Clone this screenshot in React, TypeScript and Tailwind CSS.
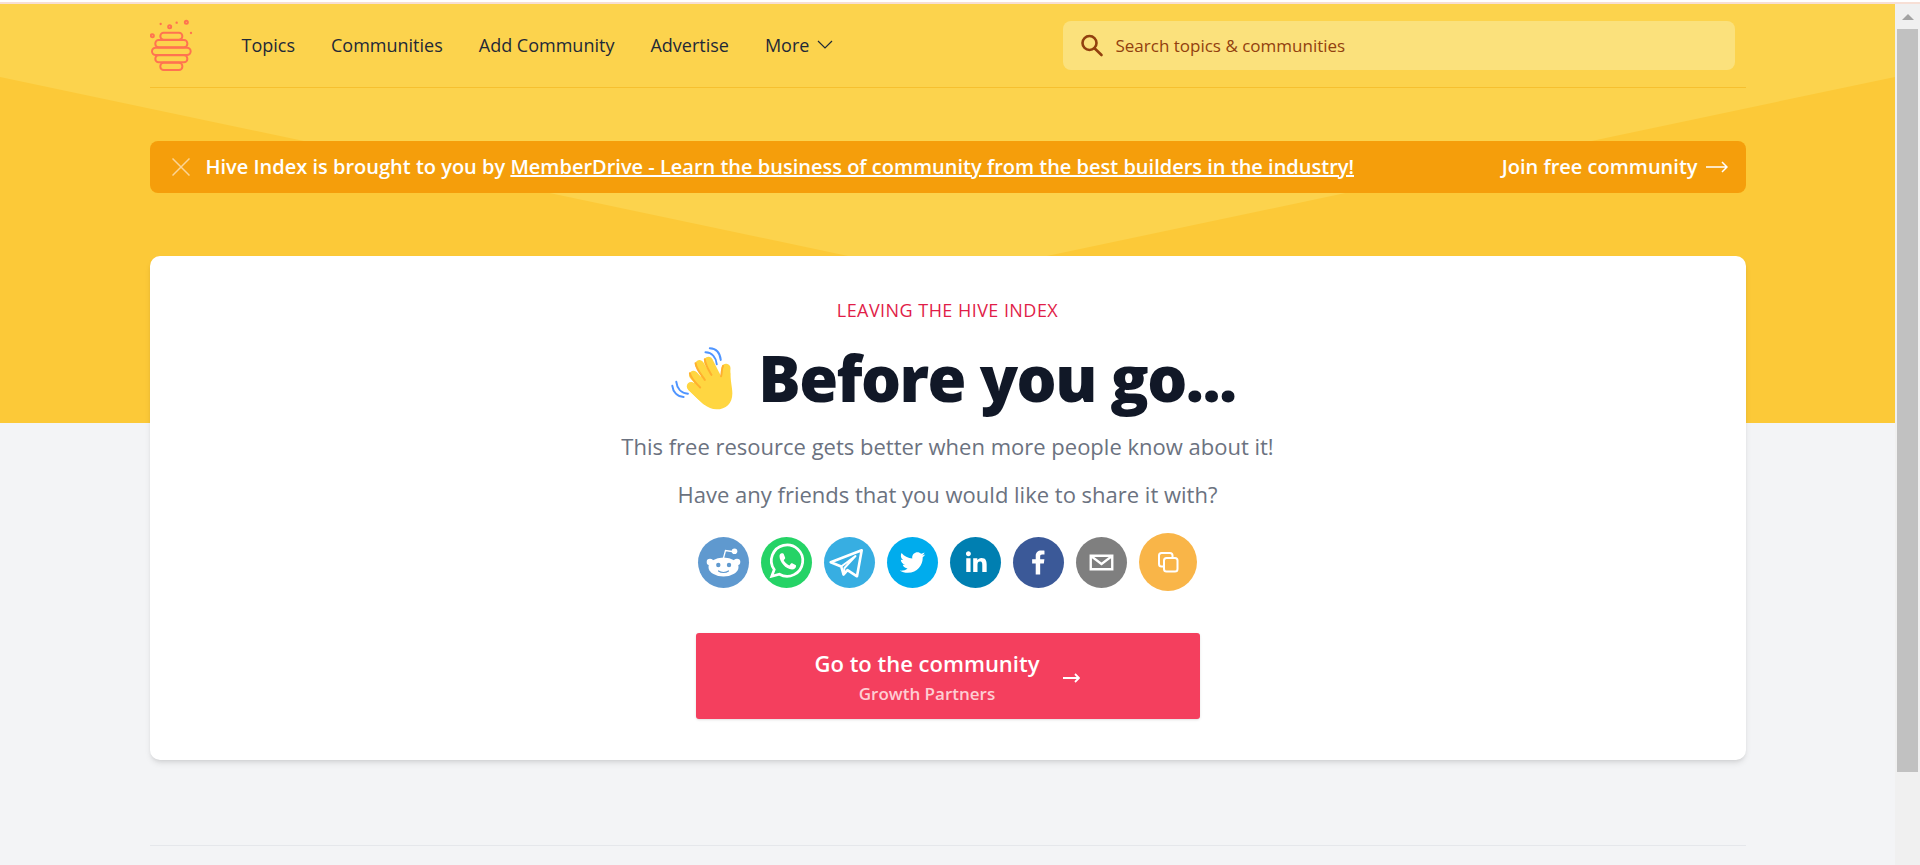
import React from "react";

const navLinks = ["Topics", "Communities", "Add Community", "Advertise"];

const shareLinks = [
  {
    id: "reddit",
    label: "Share on Reddit",
    color: "bg-[#5f99cf]",
    icon: (
      <svg viewBox="0 0 51 51" className="w-full" fill="none">
        <path d="M25.500 21 27.500 13.500 34 14.500" stroke="white" strokeWidth="1.300" />
        <circle cx="36.500" cy="14.300" r="2.800" fill="white" />
        <circle cx="12" cy="25" r="3.300" fill="white" />
        <circle cx="39" cy="25" r="3.300" fill="white" />
        <ellipse cx="25.500" cy="30" rx="15" ry="9.500" fill="white" />
        <circle cx="20.300" cy="28" r="2.200" fill="#5f99cf" />
        <circle cx="31" cy="28" r="2.200" fill="#5f99cf" />
        <path d="M20.500 34c2.800 2 7.200 2 10 0" stroke="#5f99cf" strokeWidth="1.200" strokeLinecap="round" />
      </svg>
    ),
  },
  {
    id: "whatsapp",
    label: "Share on WhatsApp",
    color: "bg-[#25d366]",
    icon: (
      <svg viewBox="0 0 51 51" className="w-full" fill="none">
        <path d="M13.200 32.600A15.700 15.700 0 1 1 18.400 37.300L10.700 39.300Z" stroke="white" strokeWidth="2.700" />
        <path
          d="M18.500 19c0-1.500 1.200-2.700 2.200-2.700h1c.5 0 .8.3 1 .8l1.400 3.400c.2.5.1.8-.2 1.200l-1.200 1.500c1.300 2.400 3.200 4.100 5.700 5.200l1.600-1.800c.3-.4.7-.5 1.200-.3l3.300 1.600c.5.2.7.5.6 1-.2 2.100-1.800 3.500-4 3.500C24.500 32.400 18.500 24.800 18.500 19z"
          fill="white"
        />
      </svg>
    ),
  },
  {
    id: "telegram",
    label: "Share on Telegram",
    color: "bg-[#37aee2]",
    icon: (
      <svg viewBox="0 0 51 51" className="w-full" fill="none" stroke="white" strokeLinejoin="round" strokeLinecap="round">
        <path d="M6.700 25.200 37.700 13.300 33 39.300 23.500 33.200 19.500 37.500 17.200 29.500Z" strokeWidth="2.600" />
        <path d="M17.200 29.500 31.500 19 20.500 31 19.500 37" strokeWidth="2" />
      </svg>
    ),
  },
  {
    id: "twitter",
    label: "Share on Twitter",
    color: "bg-[#00aced]",
    icon: (
      <svg viewBox="0 0 64 64" className="w-full" fill="white">
        <path d="M48,22.1c-1.2,0.5-2.4,0.9-3.8,1c1.4-0.8,2.4-2.1,2.9-3.6c-1.3,0.8-2.7,1.3-4.2,1.6 C41.7,19.8,40,19,38.2,19c-3.6,0-6.6,2.9-6.6,6.6c0,0.5,0.1,1,0.2,1.5c-5.5-0.3-10.3-2.9-13.5-6.9c-0.6,1-0.9,2.1-0.9,3.3 c0,2.3,1.2,4.3,2.9,5.5c-1.1,0-2.1-0.3-3-0.8c0,0,0,0.1,0,0.1c0,3.2,2.3,5.8,5.3,6.4c-0.6,0.1-1.1,0.2-1.7,0.2c-0.4,0-0.8,0-1.2-0.1 c0.8,2.6,3.3,4.5,6.1,4.6c-2.2,1.8-5.1,2.8-8.2,2.8c-0.5,0-1.1,0-1.6-0.1c2.9,1.9,6.4,2.9,10.1,2.9c12.1,0,18.7-10,18.7-18.7 c0-0.3,0-0.6,0-0.8C46,24.5,47.1,23.4,48,22.1z" />
      </svg>
    ),
  },
  {
    id: "linkedin",
    label: "Share on LinkedIn",
    color: "bg-[#007fb1]",
    icon: (
      <svg viewBox="0 0 64 64" className="w-full" fill="white">
        <path d="M20.4,44h5.4V26.6h-5.4V44z M23.1,18c-1.7,0-3.1,1.4-3.1,3.1c0,1.7,1.4,3.1,3.1,3.1 c1.7,0,3.1-1.4,3.1-3.1C26.2,19.4,24.8,18,23.1,18z M39.5,26.2c-2.6,0-4.4,1.4-5.1,2.8h-0.1v-2.4h-5.2V44h5.4v-8.6 c0-2.3,0.4-4.5,3.2-4.5c2.8,0,2.8,2.6,2.8,4.6V44H46v-9.500C46,29.8,45,26.2,39.5,26.2z" />
      </svg>
    ),
  },
  {
    id: "facebook",
    label: "Share on Facebook",
    color: "bg-[#3b5998]",
    icon: (
      <svg viewBox="0 0 64 64" className="w-full" fill="white">
        <path d="M34.1,47V33.3h4.6l0.7-5.3h-5.3v-3.4c0-1.5,0.4-2.6,2.6-2.6l2.8,0v-4.8c-0.5-0.1-2.2-0.2-4.1-0.2 c-4.1,0-6.9,2.5-6.9,7V28H24v5.3h4.5V47H34.1z" />
      </svg>
    ),
  },
  {
    id: "email",
    label: "Share by email",
    color: "bg-[#7f7f7f]",
    icon: (
      <svg viewBox="0 0 64 64" className="w-full" fill="white">
        <path d="M17,22v20h30V22H17z M41.1,25L32,32.1L22.9,25H41.1z M20,39V26.6l12,9.3l12-9.3V39H20z" />
      </svg>
    ),
  },
];

function Logo() {
  return (
    <svg viewBox="18 28 132 156" className="h-[52px] w-11" fill="none" stroke="#ff7350" strokeWidth="6">
      <rect x="49" y="69" width="66" height="21" rx="10" />
      <rect x="34" y="91" width="96" height="22" rx="10" />
      <rect x="24" y="114" width="116" height="22" rx="11" />
      <rect x="34" y="137" width="96" height="21" rx="10" />
      <rect x="49" y="159" width="66" height="22" rx="10" />
      <circle cx="25" cy="78" r="4.500" />
      <circle cx="77" cy="51" r="4.500" />
      <circle cx="127" cy="38" r="4.500" />
      <g fill="#ff7350" stroke="none">
        <circle cx="50" cy="43" r="3.500" />
        <circle cx="98" cy="39" r="3.500" />
        <circle cx="141" cy="70" r="3.500" />
      </g>
    </svg>
  );
}

function WavingHand() {
  return (
    <svg viewBox="36 38 190 194" className="h-[65px] w-[63px]" fill="none" strokeLinecap="round">
      <g stroke="#ffd641" strokeWidth="27">
        <path d="M149 83 178 140" />
        <path d="M122 93 160 155" />
        <path d="M104 125 145 170" />
        <path d="M97 159 140 200" />
        <path d="M202 104 198 160" />
      </g>
      <path
        d="M160 110C172 118 180 130 187 132C200 128 213 140 216 110C214 142 221 160 221 180C221 210 202 228 173 228C146 228 128 208 88 169C100 150 130 120 160 110Z"
        fill="#ffd641"
      />
      <g stroke="#ffb02e" strokeWidth="6">
        <path d="M138 77C140 95 149 109 158 124" />
        <path d="M110 89C113 108 126 122 138 139" />
        <path d="M93 119C95 135 111 148 124 162" />
        <path d="M193 97C188 107 190 117 187 128" />
      </g>
      <g stroke="#4f95ff" strokeWidth="6">
        <path d="M153 44C172 45 184 58 186 79" />
        <path d="M140 56C160 57 172 72 174 92" />
        <path d="M40 157C42 176 55 190 74 191" />
        <path d="M52 145C54 165 67 179 87 181" />
      </g>
    </svg>
  );
}

export default function App() {
  return (
    <div className="flex min-h-screen flex-col bg-white pt-[2px] font-['Open_Sans',sans-serif]">
      <div className="h-[2px] bg-[#f7dfd5]"></div>

      <div className="flex grow">
        <div className="relative isolate grow bg-[#f3f4f6]">
          {/* Honey background */}
          <div className="absolute inset-x-0 top-0 -z-10 h-[419px] bg-[#fcc938]">
            <svg viewBox="0 0 100 100" preserveAspectRatio="none" className="h-[273px] w-full" fill="#fcd34d">
              <polygon points="0,0 100,0 100,26.700 50,100 0,26.700" />
            </svg>
          </div>

          <div className="mx-auto max-w-[1596px]">
            {/* Header */}
            <header className="flex h-[84px] items-center border-b border-[#f6c02f]">
              <a href="#" aria-label="Hive Index" className="pb-[2px]">
                <Logo />
              </a>
              <nav className="ml-12 flex items-center gap-9 pb-px text-[18px] leading-6 font-medium text-[#1f2937]">
                {navLinks.map((link) => (
                  <a key={link} href="#">
                    {link}
                  </a>
                ))}
                <button type="button" className="flex items-center gap-2">
                  More
                  <svg viewBox="0 0 16 10" className="w-4" fill="none" stroke="currentColor" strokeWidth="1.200">
                    <path d="M1 1 8 8 15 1" />
                  </svg>
                </button>
              </nav>
              <label className="mr-[11px] ml-auto flex h-[49px] w-[672px] items-center gap-3 rounded-lg bg-[#fbe17c] px-[17px]">
                <svg viewBox="0 0 24 24" className="h-6 w-6" fill="none" stroke="#92400e" strokeWidth="2.600" strokeLinecap="round">
                  <circle cx="9.500" cy="9" r="7" />
                  <path d="M14.500 14.200 21.500 21" />
                </svg>
                <input
                  type="search"
                  aria-label="Search topics and communities"
                  placeholder="Search topics & communities"
                  className="grow bg-transparent text-[17px] text-[#92400e] outline-none placeholder:text-[#92400e]"
                />
              </label>
            </header>

            {/* Sponsor banner */}
            <div className="mt-[53px] flex h-[52px] items-center rounded-lg bg-[#f59e0b] px-[18px] text-[20px] font-semibold text-white">
              <button type="button" aria-label="Dismiss" className="p-1">
                <svg viewBox="0 0 18 18" className="w-[18px]" fill="none" stroke="#fcd595" strokeWidth="1.500">
                  <path d="M0.500 0.500 17.500 17.500M17.500 0.500 0.500 17.500" />
                </svg>
              </button>
              <p className="ml-3">
                Hive Index is brought to you by{" "}
                <a href="#" className="underline">
                  MemberDrive - Learn the business of community from the best builders in the industry!
                </a>
              </p>
              <a href="#" className="ml-auto flex items-center gap-2">
                Join free community
                <svg viewBox="0 0 22 12" className="w-[22px]" fill="none" stroke="currentColor" strokeWidth="1.500">
                  <path d="M0 6H21M16 1 21 6 16 11" />
                </svg>
              </a>
            </div>

            {/* Leaving card */}
            <main className="mt-[63px] flex flex-col items-center rounded-[10px] bg-white pt-[42px] pb-[41px] text-center shadow-md">
              <p className="text-[18px] leading-6 font-medium tracking-wide text-[#e11d48] uppercase">
                Leaving the Hive Index
              </p>
              <h1 className="mt-[26px] flex h-[60px] items-center gap-6 pl-3 text-[63px] leading-[60px] font-extrabold tracking-tight text-[#111827]">
                <WavingHand />
                Before you go...
              </h1>
              <p className="mt-5 text-[22px] leading-9 text-[#6b7280]">
                This free resource gets better when more people know about it!
              </p>
              <p className="mt-3 text-[22px] leading-9 text-[#6b7280]">
                Have any friends that you would like to share it with?
              </p>

              <div className="mt-[21px] flex items-center gap-3">
                {shareLinks.map((share) => (
                  <button
                    key={share.id}
                    type="button"
                    aria-label={share.label}
                    className={`h-[51px] w-[51px] overflow-hidden rounded-full ${share.color}`}
                  >
                    {share.icon}
                  </button>
                ))}
                <button type="button" aria-label="Copy link" className="h-[58px] w-[58px] rounded-full bg-[#f9b548]">
                  <svg viewBox="0 0 58 58" className="w-full" fill="none" stroke="white" strokeWidth="2">
                    <path d="M24 33.500H22.500A2.500 2.500 0 0 1 20 31V22.500A2.500 2.500 0 0 1 22.500 20H31A2.500 2.500 0 0 1 33.500 22.500V24" />
                    <rect x="25" y="25" width="13.500" height="13.500" rx="2.500" />
                  </svg>
                </button>
              </div>

              <a
                href="#"
                className="mt-[42px] flex h-[86px] w-[504px] items-center justify-center gap-6 rounded-[3px] bg-[#f43f5e] pt-1 font-semibold text-white shadow-sm"
              >
                <span className="flex flex-col">
                  <span className="text-[22px] leading-8">Go to the community</span>
                  <span className="text-[17px] leading-[30px] text-[#fecdd3]">Growth Partners</span>
                </span>
                <svg viewBox="0 0 17 10" className="w-[17px]" fill="none" stroke="currentColor" strokeWidth="1.800">
                  <path d="M0 5H16M12 1 16 5 12 9" />
                </svg>
              </a>
            </main>

            <footer className="mt-[85px] border-t border-[#e5e7eb]"></footer>
          </div>
        </div>

        {/* Scroll track */}
        <div className="flex w-[25px] shrink-0 flex-col bg-[#f0f0f0] px-[2px]" aria-hidden="true">
          <div className="flex h-[25px] items-center justify-center">
            <svg viewBox="0 0 12 6" className="w-3" fill="#a3a3a3">
              <path d="M0 6 6 0 12 6Z" />
            </svg>
          </div>
          <div className="grow-8 bg-[#c1c1c1]"></div>
          <div className="grow"></div>
        </div>
      </div>
    </div>
  );
}
